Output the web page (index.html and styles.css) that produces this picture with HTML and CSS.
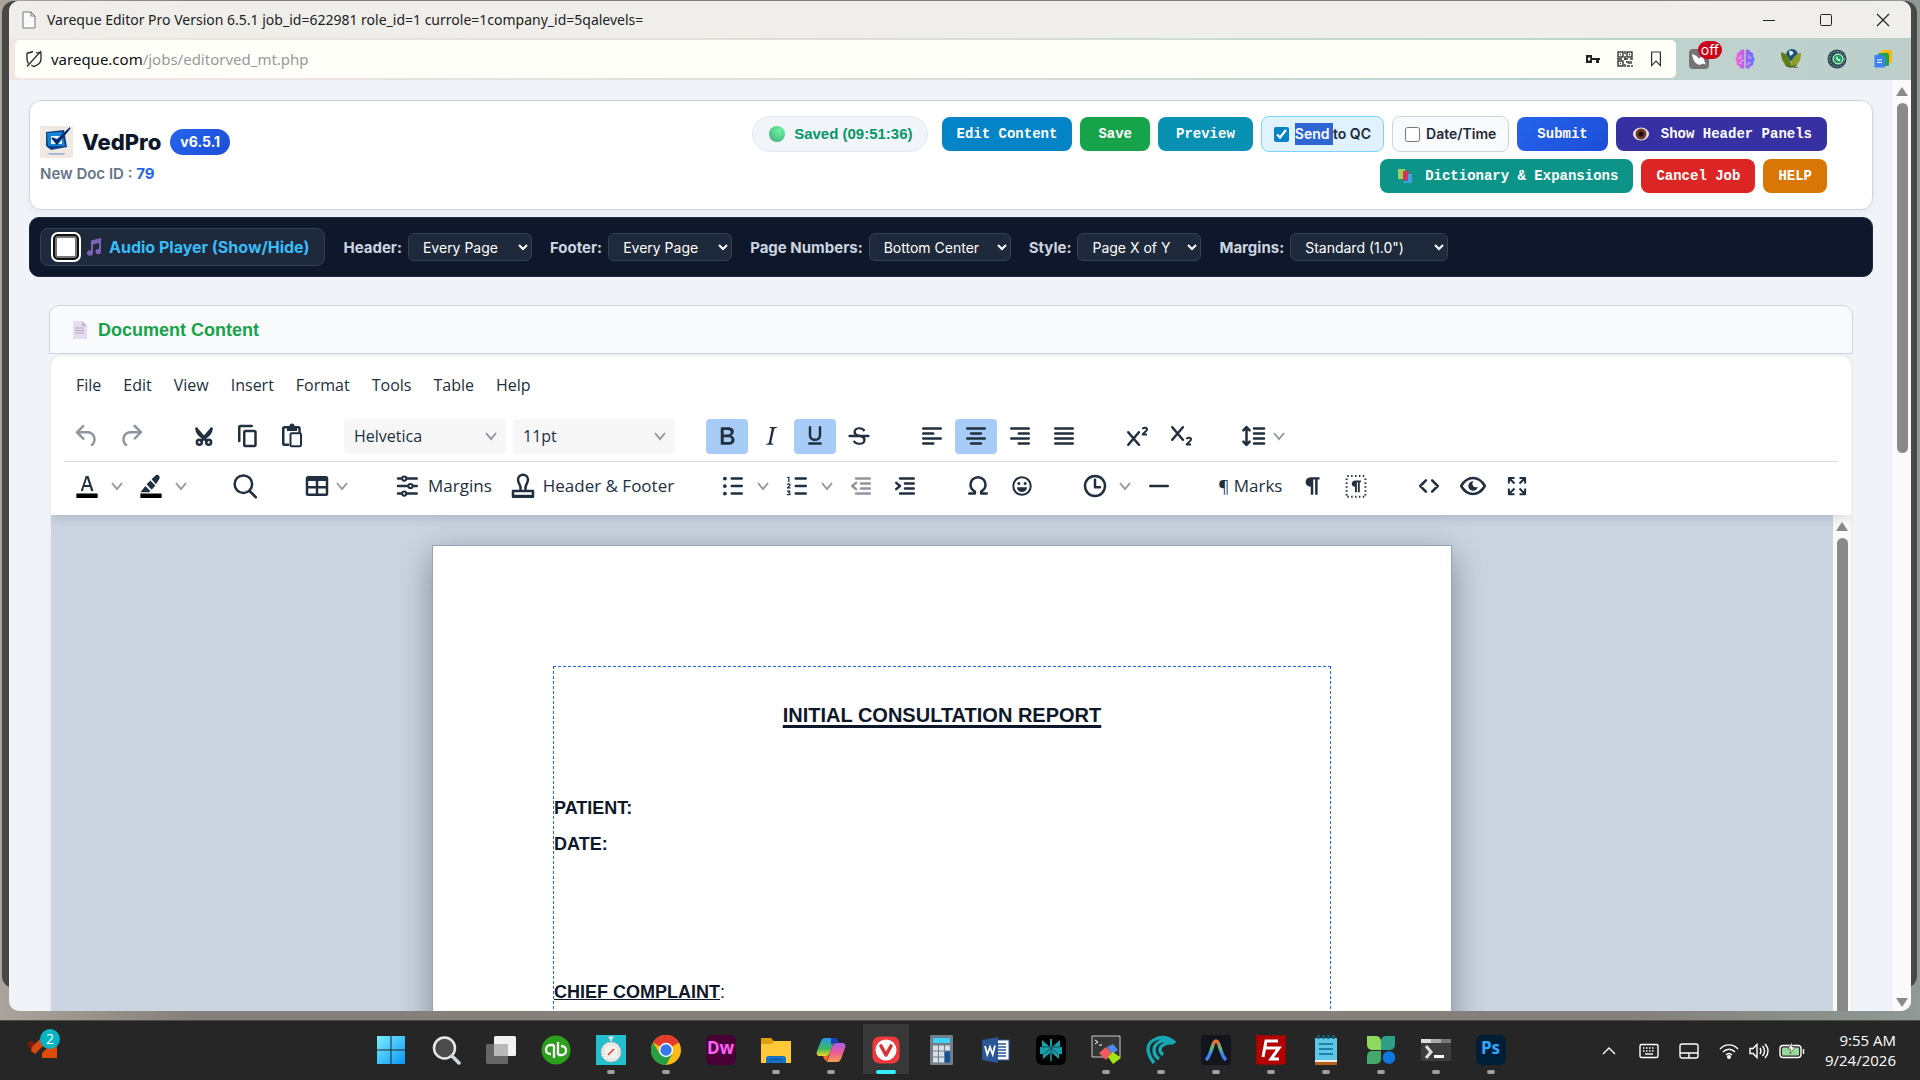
FILE: index.html
```html
<!DOCTYPE html>
<html lang="en">
<head>
<meta charset="utf-8">
<title>Vareque Editor Pro</title>
<link rel="stylesheet" href="styles.css">
</head>
<body>
<div class="desktop">
<div class="back-window"></div>
<div class="window">
  <div class="titlebar">
    <svg class="ic-file" viewBox="0 0 14 18" width="14" height="18"><path d="M1 1h8l4 4v12H1z" fill="#fafafa" stroke="#777"/><path d="M9 1v4h4" fill="none" stroke="#777"/></svg>
    <span class="title">Vareque Editor Pro Version 6.5.1 job_id=622981 role_id=1 currole=1company_id=5qalevels=</span>
    <div class="win-controls">
      <button aria-label="Minimize"><svg viewBox="0 0 14 14" width="14" height="14"><path d="M1 7.500h12" stroke="#222"/></svg></button>
      <button aria-label="Maximize"><svg viewBox="0 0 14 14" width="14" height="14"><rect x="1.500" y="1.500" width="11" height="11" rx="1" fill="none" stroke="#222"/></svg></button>
      <button aria-label="Close"><svg viewBox="0 0 14 14" width="14" height="14"><path d="M1 1l12 12M13 1L1 13" stroke="#222" stroke-width="1.200"/></svg></button>
    </div>
  </div>
  <div class="addressbar">
    <div class="urlfield">
      <svg viewBox="0 0 18 18" width="18" height="18" fill="none" stroke="#333" stroke-width="1.400"><path d="M2 3c3 0 5-1 6-1.500M2 3v6c0 2 .6 3.500 1.500 4.700M11 2.600c1.500.4 3 .4 5 .4v6c0 4-3 6-7 7.500-1-.4-2-.9-2.800-1.500"/><path d="M16 1L2 16.500"/></svg>
      <span class="url"><b>vareque.com</b>/jobs/editorved_mt.php</span>
      <div class="url-icons">
        <svg viewBox="0 0 16 16" width="16" height="16"><path d="M1 4h6v3h8v2h-1v3h-3V9H7v3H1zM3 6.500v3h2.200v-3z" fill="#222" fill-rule="evenodd"/></svg>
        <svg viewBox="0 0 16 16" width="16" height="16" fill="none" stroke="#333" stroke-width="1.400"><rect x="1" y="1" width="5" height="5"/><rect x="10" y="1" width="5" height="5"/><rect x="1" y="10" width="5" height="5"/><path d="M3 3.500h1M12 3.500h1M3 12.500h1M8 0v3M8 5v4M0 8h5M7 8h4M13 8h3M9 11h3v2M14 10v3M8 13v3M10 15h3M15 14v2"/></svg>
        <svg viewBox="0 0 16 18" width="14" height="18" fill="none" stroke="#333" stroke-width="1.400"><path d="M3 1h10v15.500l-5-5-5 5z"/></svg>
      </div>
    </div>
    <div class="extensions">
      <span class="ext"><svg viewBox="0 0 20 20" width="20" height="20"><rect width="20" height="20" rx="4" fill="#747474"/><path d="M3 5c4 1 6 3 7 5l3-4c2 3 2 6 4 10-3-2-4-1-6 0-5-1-7-5-8-11z" fill="#fff"/></svg><span class="badge-off">off</span></span>
      <span class="ext"><svg viewBox="0 0 20 20" width="20" height="20"><defs><linearGradient id="br" x1="0" x2="1"><stop stop-color="#f06acb"/><stop offset=".5" stop-color="#b45cf5"/><stop offset="1" stop-color="#5b74ff"/></linearGradient></defs><path d="M9.300 1v18C7 20.500 4.500 19 4.500 17 2 17 1 15 2 13 0 12 0 8.500 2 7.500 1 5 2.500 3 4.500 3 5 .5 8 0 9.300 1zM10.700 1v18c2.300 1.500 4.800 0 4.800-2 2.500 0 3.500-2 2.500-4 2-1 2-4.500 0-5.500 1-2.500-.5-4.500-2.500-4.500-.5-2.500-3.500-3-4.800-2z" fill="url(#br)"/><path d="M3 9h3v-3M17 9h-3v-3M4 14h3M16 14h-3v3M9 11.500H6" stroke="#fff" stroke-opacity=".55" fill="none"/></svg></span>
      <span class="ext"><svg viewBox="0 0 20 20" width="20" height="20"><circle cx="11" cy="6" r="6" fill="#1d5177"/><path d="M8 2c3-1 5 1 4 3l-3 2z" fill="#dfeef8"/><path d="M0 3c7 2 10 7 10 14C3 17 0 11 0 3z" fill="#5f7d1a"/><path d="M20 4c-6 1-10 6-10 13 7 0 10-5 10-13z" fill="#8a9d27"/><path d="M3 14c4 4 10 4 14 0l-2 3c-3 2-7 2-10 0z" fill="#46601a"/><path d="M13 18.500h4" stroke="#666"/></svg></span>
      <span class="ext"><svg viewBox="0 0 20 20" width="20" height="20"><circle cx="10" cy="10" r="9.500" fill="#2a4a52"/><circle cx="10" cy="10" r="7.500" fill="none" stroke="#8fa6aa" stroke-dasharray="2 1.500"/><circle cx="11" cy="10" r="5" fill="#17a35b" stroke="#fff"/><path d="M9 8c0 3 2 4 4 4l.5-1.500-1.500-.5-.7.5c-.6-.3-.8-.6-1-1l.5-.6-.5-1.300z" fill="#fff"/></svg></span>
      <span class="ext"><svg viewBox="0 0 20 20" width="20" height="20"><rect x="8" y="1" width="11" height="13" rx="1.500" fill="#f5b912"/><rect x="5" y="4" width="11" height="13" rx="1.500" fill="#229f53"/><path d="M1.500 6H9l3 3v9.500H1.500z" fill="#3b82f0"/><path d="M4 11h5M4 13.500h5" stroke="#fff"/></svg></span>
    </div>
  </div>

  <div class="viewport">
    <main class="page">
      <header class="card">
        <div class="brand">
          <div class="brand-row">
            <svg viewBox="0 0 33 32" width="33" height="32"><rect width="33" height="32" fill="#efe9e2"/><path d="M6 6l18-2 3 17-16 3-5-4z" fill="#0f3f86"/><path d="M7 7l15-1 3 14H8z" fill="#1583d8"/><path d="M11 10h11v8H11z" fill="#eaf6ff"/><path d="M12 12l5 6L30 2 17 14z" fill="#0a2f6e" stroke="#0a2f6e" stroke-width="1.500"/><path d="M7 27h19l-3 2H10z" fill="#a9b8d4"/></svg>
            <h1>VedPro</h1>
            <span class="version">v6.5.1</span>
          </div>
          <div class="doc-id">New Doc ID : <b>79</b></div>
        </div>
        <div class="actions">
          <span class="saved"><i class="dot"></i>Saved (09:51:36)</span>
          <button class="btn sky">Edit Content</button>
          <button class="btn wide green">Save</button>
          <button class="btn wide cyan">Preview</button>
          <label class="check on"><input type="checkbox" checked><span><mark>Send </mark>to QC</span></label>
          <label class="check"><input type="checkbox">Date/Time</label>
          <button class="btn submit">Submit</button>
          <button class="btn indigo"><svg viewBox="0 0 20 16" width="22" height="16"><ellipse cx="9" cy="8" rx="8" ry="6.500" fill="#f1e6e6"/><circle cx="9" cy="8" r="5.500" fill="#6b3a2c"/><circle cx="9" cy="8" r="2.500" fill="#160b08"/></svg>Show Header Panels</button>
          <button class="btn teal"><svg viewBox="0 0 20 16" width="22" height="16"><path d="M2 1h7v10H2z" fill="#9bd35a"/><path d="M7 3h6v10l-6-1z" fill="#d8335f"/><path d="M12 6h4v9H8l-1-2h5z" fill="#3aa5e0"/></svg>Dictionary &amp; Expansions</button>
          <button class="btn red">Cancel Job</button>
          <button class="btn amber">HELP</button>
        </div>
      </header>

      <section class="options">
        <label class="audio"><input type="checkbox"><svg viewBox="0 0 16 18" width="16" height="18"><path d="M5 2.500L15 0v13.500a2.800 2.600 0 1 1-2-2.400V5L7 6.500V15a3 2.700 0 1 1-2-2.500z" fill="#7a63b4"/></svg>Audio Player (Show/Hide)</label>
        <label class="opt">Header:<select><option>Every Page</option></select></label>
        <label class="opt">Footer:<select><option>Every Page</option></select></label>
        <label class="opt">Page Numbers:<select class="w-mid"><option>Bottom Center</option></select></label>
        <label class="opt">Style:<select><option>Page X of Y</option></select></label>
        <label class="opt">Margins:<select class="w-large"><option>Standard (1.0")</option></select></label>
      </section>

      <section class="document">
        <h2><svg viewBox="0 0 16 20" width="16" height="20"><path d="M1 1h9l5 5v13H1z" fill="#e6dcf0"/><path d="M10 1v5h5z" fill="#c3b4d2"/><path d="M3 8h9M3 10.500h9M3 13h9" stroke="#b3a8c0"/></svg>Document Content</h2>
        <div class="editor">
          <div class="tools">
            <nav class="menubar"><button>File</button><button>Edit</button><button>View</button><button>Insert</button><button>Format</button><button>Tools</button><button>Table</button><button>Help</button></nav>
            <div class="toolbar">
              <div class="group">
                <button class="tool off" aria-label="Undo"><svg viewBox="0 0 24 24"><path d="M6.400 8H12c3.700 0 6.200 2 6.800 5.100.6 2.700-.4 5.600-2.300 6.800a1 1 0 0 1-1-1.800c1.100-.6 1.800-2.700 1.400-4.600-.5-2.100-2.100-3.500-4.900-3.500H6.400l3.300 3.300a1 1 0 1 1-1.400 1.400l-5-5a1 1 0 0 1 0-1.400l5-5a1 1 0 0 1 1.400 1.400L6.400 8Z"/></svg></button>
                <button class="tool off" aria-label="Redo"><svg viewBox="0 0 24 24"><path d="M17.600 10H12c-2.800 0-4.400 1.400-4.900 3.500-.4 2 .3 4 1.400 4.600a1 1 0 1 1-1 1.800c-2-1.200-2.900-4.100-2.300-6.800.6-3 3-5.100 6.800-5.100h5.600l-3.300-3.300a1 1 0 1 1 1.400-1.400l5 5a1 1 0 0 1 0 1.400l-5 5a1 1 0 0 1-1.400-1.400l3.300-3.300Z"/></svg></button>
              </div>
              <div class="group">
                <button class="tool" aria-label="Cut"><svg viewBox="0 0 24 24"><path d="M6 6c0 4 3 6 5 7.500l3.500 2.500M18 6c0 4-3 6-5 7.500L9.500 16" class="ln"/><path d="M6.300 6.500L12 13l5.700-6.500" class="ln"/><circle cx="8.300" cy="17" r="2" class="ln"/><circle cx="15.700" cy="17" r="2" class="ln"/></svg></button>
                <button class="tool" aria-label="Copy"><svg viewBox="0 0 24 24"><path d="M5 16V5c0-.6.4-1 1-1h9" class="ln"/><rect x="9" y="8" width="9" height="12" rx="1" class="ln"/></svg></button>
                <button class="tool" aria-label="Paste"><svg viewBox="0 0 24 24"><path d="M9 19H6c-.6 0-1-.4-1-1V6c0-.6.4-1 1-1h11c.6 0 1 .4 1 1v3" class="ln"/><path d="M8 4h2a2 2 0 0 1 4 0h2v4H8z"/><rect x="10.800" y="9.800" width="8.400" height="10.400" rx="1" class="ln thin"/></svg></button>
              </div>
              <div class="group selects">
                <span class="pick"><select aria-label="Font"><option>Helvetica</option></select><svg viewBox="0 0 14 14" width="14" height="14"><path d="M2 4l5 6 5-6"/></svg></span>
                <span class="pick"><select aria-label="Size"><option>11pt</option></select><svg viewBox="0 0 14 14" width="14" height="14"><path d="M2 4l5 6 5-6"/></svg></span>
              </div>
              <div class="group">
                <button class="tool active" aria-label="Bold"><svg viewBox="0 0 24 24"><path d="M7.800 19c-.3 0-.5 0-.6-.2l-.2-.5V5.700c0-.2 0-.4.2-.5l.6-.2h5c1.500 0 2.700.3 3.500 1 .7.6 1.100 1.400 1.100 2.500a3 3 0 0 1-.6 1.900c-.4.6-1 1-1.600 1.200.4.1.9.3 1.300.6s.8.7 1 1.200c.4.4.5 1 .5 1.600 0 1.300-.4 2.300-1.300 3-.8.7-2.100 1-3.800 1H7.800Zm5-8.300c.6 0 1.200-.1 1.600-.5.4-.3.6-.7.6-1.300 0-1.100-.8-1.700-2.300-1.700H9.300v3.500h3.400Zm.5 6c.7 0 1.300-.1 1.700-.4.4-.4.6-.9.6-1.500s-.2-1-.7-1.400c-.4-.3-1-.4-2-.4H9.400v3.800h4Z"/></svg></button>
                <button class="tool" aria-label="Italic"><svg viewBox="0 0 24 24"><path d="m16.700 4.700-.1.900h-.3c-.6 0-1 0-1.400.3-.3.3-.4.6-.5 1.100l-2.100 9.800v.6c0 .5.4.8 1.400.8h.2l-.2.8H8l.2-.8h.2c1.100 0 1.800-.5 2-1.500l2-9.800.1-.5c0-.6-.4-.8-1.400-.8h-.3l.2-.9h5.800Z"/></svg></button>
                <button class="tool active" aria-label="Underline"><svg viewBox="0 0 24 24"><path d="M8 5v6.500C8 13.500 9.800 15 12 15s4-1.500 4-3.500V5M7.500 18h9" class="ln"/></svg></button>
                <button class="tool" aria-label="Strikethrough"><svg viewBox="0 0 24 24"><path d="M15.600 8.500c-.5-.7-1-1.100-1.300-1.300-.6-.4-1.300-.6-2-.6-2.700 0-2.800 1.700-2.800 2.100 0 1.600 1.800 2 3.200 2.300 4.400.9 4.600 2.800 4.600 3.900 0 1.400-.7 4.100-5 4.100A6.200 6.200 0 0 1 7 16.400l1.500-1.100c.4.6 1.600 2 3.700 2 1.600 0 2.500-.4 3-1.200.4-.8.3-2-.8-2.600-.7-.4-1.600-.7-2.900-1-1-.2-3.900-.8-3.900-3.600C7.600 6 10.300 5 12.400 5c2.900 0 4.200 1.600 4.700 2.400l-1.500 1.100Z"/><path d="M4.500 12h15" class="ln"/></svg></button>
              </div>
              <div class="group">
                <button class="tool" aria-label="Align left"><svg viewBox="0 0 24 24"><path d="M5 6h14M5 10h8M5 14h14M5 18h8" class="ln"/></svg></button>
                <button class="tool active" aria-label="Align center"><svg viewBox="0 0 24 24"><path d="M5 6h14M8 10h8M5 14h14M8 18h8" class="ln"/></svg></button>
                <button class="tool" aria-label="Align right"><svg viewBox="0 0 24 24"><path d="M5 6h14M11 10h8M5 14h14M11 18h8" class="ln"/></svg></button>
                <button class="tool" aria-label="Justify"><svg viewBox="0 0 24 24"><path d="M5 6h14M5 10h14M5 14h14M5 18h14" class="ln"/></svg></button>
              </div>
              <div class="group">
                <button class="tool" aria-label="Superscript"><svg viewBox="0 0 24 24"><path d="M5 9l8.500 10M13.500 9L5 19" class="ln"/><path d="M16.500 6.500c.3-1.500 3.500-1.600 3.500.3 0 1.500-2.500 2.200-3.500 4H20" class="ln thin"/></svg></button>
                <button class="tool" aria-label="Subscript"><svg viewBox="0 0 24 24"><path d="M5 5l8.500 10M13.500 5L5 15" class="ln"/><path d="M16.500 14.500c.3-1.500 3.500-1.600 3.500.3 0 1.500-2.500 2.200-3.500 4H20" class="ln thin"/></svg></button>
              </div>
              <div class="group">
                <button class="tool drop" aria-label="Line height"><svg viewBox="0 0 24 24"><path d="M6 5v14M3.500 7.500L6 4.800l2.500 2.700M3.500 16.500L6 19.200l2.500-2.700M12 6h8M12 10h8M12 14h8M12 18h8" class="ln"/></svg><svg class="chev" viewBox="0 0 14 14"><path d="M2 4l5 6 5-6"/></svg></button>
              </div>
            </div>
            <div class="toolbar second">
              <div class="group">
                <button class="tool split" aria-label="Text color"><svg viewBox="0 0 24 24"><path d="M3.500 18h17v3.500h-17z" fill="#000"/><path d="M8.700 16H7l4-12h2.200l4 12h-1.900l-1-3.200H9.700L8.700 16Zm1.500-4.800h3.600L12 5.700z"/></svg><svg class="chev" viewBox="0 0 14 14"><path d="M2 4l5 6 5-6"/></svg></button>
                <button class="tool split" aria-label="Highlight color"><svg viewBox="0 0 24 24"><path d="M3.500 18h17v3.500h-17z" fill="#000"/><path d="M3.500 17l4-5 4 4-1 1zM8.500 10.500l3-3 4 4-3 3.500zM12.500 6.500l3-3c2-1.500 4.500 1 3 3l-2.500 4z"/></svg><svg class="chev" viewBox="0 0 14 14"><path d="M2 4l5 6 5-6"/></svg></button>
              </div>
              <div class="group"><button class="tool" aria-label="Find"><svg viewBox="0 0 24 24"><circle cx="11.500" cy="10.500" r="7" class="ln"/><path d="M16.500 16l5 5" class="ln"/></svg></button></div>
              <div class="group"><button class="tool drop" aria-label="Table"><svg viewBox="0 0 24 24"><path fill-rule="evenodd" d="M19 4a2 2 0 0 1 2 2v12a2 2 0 0 1-2 2H5a2 2 0 0 1-2-2V6c0-1.100.9-2 2-2h14ZM5 14v4h6v-4H5Zm14 0h-6v4h6v-4Zm0-6h-6v4h6V8ZM5 12h6V8H5v4Z"/></svg><svg class="chev" viewBox="0 0 14 14"><path d="M2 4l5 6 5-6"/></svg></button></div>
              <div class="group">
                <button class="tool text"><svg viewBox="0 0 24 24"><path d="M4 6h3M11 6h8M4 12h8M16 12h3M4 18h3M11 18h8" class="ln"/><circle cx="9" cy="6" r="1.700" class="ln thin"/><circle cx="14" cy="12" r="1.700" class="ln thin"/><circle cx="9" cy="18" r="1.700" class="ln thin"/></svg>Margins</button>
                <button class="tool text"><svg viewBox="0 0 24 24"><path d="M10 15c1-3-2-5-2-8a4 4 0 0 1 8 0c0 3-3 5-2 8M4 20.500h16v-4.500H4z" class="ln"/><path d="M4 19h16v2H4z"/></svg>Header &amp; Footer</button>
              </div>
              <div class="group">
                <button class="tool split" aria-label="Bullet list"><svg viewBox="0 0 24 24"><path d="M11 6h8M11 12h8M11 18h8" class="ln"/><circle cx="5.500" cy="6" r="1.500"/><circle cx="5.500" cy="12" r="1.500"/><circle cx="5.500" cy="18" r="1.500"/></svg><svg class="chev" viewBox="0 0 14 14"><path d="M2 4l5 6 5-6"/></svg></button>
                <button class="tool split" aria-label="Numbered list"><svg viewBox="0 0 24 24"><path d="M11 6h8M11 12h8M11 18h8" class="ln"/><path d="M4.500 5h1v3.500M4.300 10.500h2v1l-2 2h2.200M4.300 16h2l-1 1.200 1 .4v1.200h-2" class="ln hair"/></svg><svg class="chev" viewBox="0 0 14 14"><path d="M2 4l5 6 5-6"/></svg></button>
                <button class="tool off" aria-label="Outdent"><svg viewBox="0 0 24 24"><path d="M8 6h11M12 10h7M12 14h7M8 18h11M8 9.500L5 12l3 2.500" class="ln"/></svg></button>
                <button class="tool" aria-label="Indent"><svg viewBox="0 0 24 24"><path d="M8 6h11M12 10h7M12 14h7M8 18h11M5 9.500L8 12l-3 2.500" class="ln"/></svg></button>
              </div>
              <div class="group">
                <button class="tool" aria-label="Special character"><svg viewBox="0 0 24 24"><path d="M5 18h4.500v-1.500C7 15 6 13 6 11c0-3.300 2.500-6 6-6s6 2.700 6 6c0 2-1 4-3.500 5.500V18H19" class="ln"/></svg></button>
                <button class="tool" aria-label="Emoji"><svg viewBox="0 0 24 24"><circle cx="12" cy="12" r="7" class="ln thin"/><circle cx="9.500" cy="10" r="1.200"/><circle cx="14.500" cy="10" r="1.200"/><path d="M8 13h8c0 5-8 5-8 0z"/></svg></button>
              </div>
              <div class="group">
                <button class="tool split" aria-label="Date and time"><svg viewBox="0 0 24 24"><circle cx="12" cy="12" r="8" class="ln"/><path d="M12 7v6h4" class="ln"/></svg><svg class="chev" viewBox="0 0 14 14"><path d="M2 4l5 6 5-6"/></svg></button>
                <button class="tool" aria-label="Horizontal line"><svg viewBox="0 0 24 24"><path d="M5 12h14" class="ln"/></svg></button>
              </div>
              <div class="group">
                <button class="tool text">¶ Marks</button>
                <button class="tool" aria-label="Paragraph marks"><svg viewBox="0 0 24 24"><path d="M11 5h7v1.800h-1.500V19h-2V6.800H13V19h-2v-6.500C5.500 12.500 5.500 5 11 5z"/></svg></button>
                <button class="tool" aria-label="Show blocks"><svg viewBox="0 0 24 24"><path d="M5 4h14.500M5 20.500h14.500M4.500 6v14M19.500 6v14" class="ln thin" stroke-dasharray="1.200 1.900"/><path d="M11.500 7.500H16V9h-1v8h-1.500V9h-.8v8h-1.500v-4.500c-3.500 0-3.500-5 .3-5z"/></svg></button>
              </div>
              <div class="group">
                <button class="tool" aria-label="Source code"><svg viewBox="0 0 24 24"><path d="M9.500 7.500L5 12l4.500 4.500M14.500 7.500L19 12l-4.500 4.500" class="ln"/></svg></button>
                <button class="tool" aria-label="Preview page"><svg viewBox="0 0 24 24"><path d="M2.500 12c5-8.500 14-8.500 19 0-5 8.500-14 8.500-19 0z" class="ln"/><path d="M12.500 8.300a3.800 3.800 0 1 0 3.300 4 2.400 2.400 0 0 1-3.300-4z"/></svg></button>
                <button class="tool" aria-label="Fullscreen"><svg viewBox="0 0 24 24"><path d="M10 10L6 6M5.500 10V5.500H10M14 10l4-4M14 5.500h4.500V10M10 14l-4 4M5.500 14v4.500H10M14 14l4 4M18.500 14v4.500H14" class="ln thin"/></svg></button>
              </div>
            </div>
          </div>
          <div class="canvas">
            <div class="canvas-body">
              <article class="sheet">
                <div class="margin-box">
                  <h3>INITIAL CONSULTATION REPORT</h3>
                  <p>PATIENT:</p>
                  <p>DATE:</p>
                  <p class="complaint"><u>CHIEF COMPLAINT</u><span>:</span></p>
                </div>
              </article>
            </div>
            <div class="scroll inner"><i class="up"></i><i class="thumb"></i></div>
          </div>
        </div>
      </section>
    </main>
    <div class="scroll outer"><i class="up"></i><i class="thumb"></i><i class="down"></i></div>
  </div>
</div>

<footer class="taskbar">
  <div class="widget">
    <svg viewBox="0 0 40 40" width="40" height="40"><path d="M2 18l4-4 6 6-4 6z" fill="#7d1a0a"/><path d="M7 21l10-10 5 5-12 12-4-3z" fill="#d84a12"/><path d="M20 18h12v14H17v-5l5-5-4-1z" fill="#e04a08"/></svg>
    <span class="count">2</span>
  </div>
  <div class="apps">
    <button aria-label="Start"><svg viewBox="0 0 30 30"><defs><linearGradient id="wn" x1="0" y1="0" x2="1" y2="1"><stop stop-color="#7cefff"/><stop offset="1" stop-color="#0a94f5"/></linearGradient></defs><path d="M1 1h13.500v13.500H1zM15.500 1H29v13.500H15.500zM1 15.500h13.500V29H1zM15.500 15.500H29V29H15.500z" fill="url(#wn)"/></svg></button>
    <button aria-label="Search"><svg viewBox="0 0 30 30"><circle cx="13.500" cy="13" r="10.500" fill="#4b4b4b" stroke="#e5e9ea" stroke-width="2.500"/><path d="M21 21l7 7" stroke="#cfd6d9" stroke-width="3.500" stroke-linecap="round"/></svg></button>
    <button aria-label="Task view"><svg viewBox="0 0 30 30"><rect y="9" width="22" height="20" rx="1.500" fill="#666"/><rect x="8" y="1" width="22" height="20" rx="1.500" fill="#f2f2f2"/><path d="M8 9h14v12H8z" fill="#b9b9b9"/></svg></button>
    <button aria-label="QuickBooks"><svg viewBox="0 0 30 30"><circle cx="15" cy="15" r="14.500" fill="#2ca01c"/><path d="M13 10H9.500a4.500 4.500 0 0 0 0 9H10M13 10v13M17 20h3.500a4.500 4.500 0 0 0 0-9H20M17 20V7" fill="none" stroke="#fff" stroke-width="2.300"/></svg></button>
    <button class="run" aria-label="Stopwatch"><svg viewBox="0 0 30 30"><rect width="30" height="30" fill="#22bfcd"/><circle cx="15" cy="17" r="10" fill="#f1f1ee" stroke="#bbb"/><circle cx="15" cy="17" r="7.500" fill="none" stroke="#aaa" stroke-dasharray="1 2"/><path d="M12 20l6-6" stroke="#d5362e" stroke-width="1.500"/><path d="M15 6V2M12.500 2.500h5" stroke="#e3e3e3" stroke-width="2"/></svg></button>
    <button class="run" aria-label="Chrome"><svg viewBox="0 0 30 30"><circle cx="15" cy="15" r="15" fill="#fbbc16"/><path d="M15 15L2 7.500a15 15 0 0 1 26 0z" fill="#e33b2e"/><path d="M2 7.500A15 15 0 0 0 15 30l6.500-11.200L9 19z" fill="#27a044"/><circle cx="15" cy="15" r="7.200" fill="#fff"/><circle cx="15" cy="15" r="5.700" fill="#3479ea"/></svg></button>
    <button aria-label="Dreamweaver"><span class="tile dw">Dw</span></button>
    <button class="run" aria-label="Files"><svg viewBox="0 0 30 30"><path d="M0 3h10l3 3h12v6H0z" fill="#e0a008"/><path d="M0 9h11l2-3h17v22H0z" fill="#ffc938"/><path d="M5 28v-4c0-2 1-3 3-3h14c2 0 3 1 3 3v4z" fill="#1271c9"/><path d="M9 24.500h12" stroke="#0b4d92"/></svg></button>
    <button class="run" aria-label="Copilot"><svg viewBox="0 0 30 30"><defs><linearGradient id="c1" x2="0" y2="1"><stop stop-color="#2396ec"/><stop offset=".6" stop-color="#3fb85c"/><stop offset="1" stop-color="#edd52a"/></linearGradient><linearGradient id="c2" x2="0" y2="1"><stop stop-color="#a85df0"/><stop offset=".5" stop-color="#ed5a94"/><stop offset="1" stop-color="#f9a050"/></linearGradient></defs><path d="M9 3h10l-5 15c-1 2-2 3-4 3H4c-3 0-4-2-3-5L5 6c1-2 2-3 4-3z" fill="url(#c1)"/><path d="M15 3h4c2 0 3 1 4 5h-5c-2 0-3 1-3 2z" fill="#1c3fb9"/><path d="M21 27H11l5-15c1-2 2-4 4-4h6c3 0 4 2 3 5l-4 11c-1 2-2 3-4 3z" fill="url(#c2)"/><path d="M15 12l-4 14c-2 0-3-2-4-5h3c2 0 3-1 4-3z" fill="#e8682c"/></svg></button>
    <button class="run current" aria-label="Vivaldi"><svg viewBox="0 0 30 30"><rect x="1.500" y="1.500" width="27" height="27" rx="7" fill="#ee3a3d"/><circle cx="15" cy="15" r="10.500" fill="#fff"/><path d="M10 11l5 9 5-9" fill="none" stroke="#d93437" stroke-width="3.600" stroke-linecap="round" stroke-linejoin="round"/></svg></button>
    <button aria-label="Calculator"><svg viewBox="0 0 30 30"><rect x="4" width="23" height="30" rx="1" fill="#717d88"/><path d="M7 3h17v5H7z" fill="#40d3f6"/><path d="M7 10.500h5v5H7zM13 10.500h5v5h-5zM19 10.500h5v5h-5zM7 16.500h5v5H7zM13 16.500h5v5h-5zM7 22.500h5v5H7zM13 22.500h5v5h-5z" fill="#d8e0e6"/><path d="M19 16.500h5v11h-5z" fill="#0e539c"/></svg></button>
    <button aria-label="Word"><svg viewBox="0 0 30 30"><path d="M14 5h14v20H14z" fill="#fff" stroke="#2b5797"/><path d="M16 9h9M16 12h9M16 15h9M16 18h9M16 21h9" stroke="#2b5797" stroke-width="1.400"/><path d="M1 5l16-3v26L1 25z" fill="#2b5797"/><path d="M4 11l2.300 8.500L9 12l2.700 7.500L14 10.500" fill="none" stroke="#fff" stroke-width="1.800"/></svg></button>
    <button aria-label="Perplexity"><svg viewBox="0 0 30 30"><rect width="30" height="30" rx="6" fill="#020202"/><path d="M6 5l8 7V4h2v8l8-7v7h2v7h-3v5l-7-6v8h-2v-8l-7 6v-5H4v-7h2z" fill="#189ea8"/><path d="M15 12v14M15 13l7 6M15 13l-7 6M6 12h18" stroke="#0c4f58" fill="none"/></svg></button>
    <button class="run" aria-label="Terminal tools"><svg viewBox="0 0 30 30"><path d="M1 1h28v21H1z" fill="#353535" stroke="#ccc"/><path d="M4 5l3 2-3 2M8 10h3" stroke="#fff" fill="none"/><path d="M8 18l7-6 6 6-6 7z" fill="#f15b5b"/><path d="M16 12l6-3 5 6-6 4z" fill="#4d8af0"/><path d="M17 22l5-5 8 6-8 6z" fill="#a2e414"/></svg></button>
    <button class="run" aria-label="Swirl"><svg viewBox="0 0 30 30" fill="none" stroke="#16a8b4" stroke-width="3.400"><path d="M29 8C17-3 2 5 2 14c0 6 3 10 6 14M27 7C16 2 8 9 8 15c0 4 2 7 5 9M27 8c-8-1-13 3-13 7 0 2 1 3 3 5"/></svg></button>
    <button class="run" aria-label="Arc plot"><svg viewBox="0 0 30 30"><defs><linearGradient id="ar" x2="0" y2="1"><stop stop-color="#f06a34"/><stop offset=".4" stop-color="#58bd82"/><stop offset=".7" stop-color="#3b82f6"/></linearGradient></defs><rect width="30" height="30" fill="#14151c"/><path d="M5 25C11 20 11 6 15 6s4 14 10 19" fill="none" stroke="url(#ar)" stroke-width="3.500"/></svg></button>
    <button class="run" aria-label="FileZilla"><svg viewBox="0 0 30 30"><rect x="1" y="1" width="28" height="28" fill="#b30000" stroke="#b30000" stroke-width="2" stroke-dasharray="2 1"/><path d="M7 22L10 6h12M9 13h9M15 13h8l-8 11h8" fill="none" stroke="#fff" stroke-width="3"/></svg></button>
    <button class="run" aria-label="Notepad"><svg viewBox="0 0 30 30"><path d="M4 26h22v4H4z" fill="#b45f15"/><path d="M4 24h22v3H4z" fill="#eee"/><path d="M4 3h22v22H4z" fill="#5ec6e6"/><path d="M8 9h14M8 14h14M8 19h14" stroke="#0d6b92" stroke-width="1.600"/><path d="M7.500 0v4M12.500 0v4M17.500 0v4M22.500 0v4" stroke="#0c6387" stroke-width="2.500"/></svg></button>
    <button class="run" aria-label="Clover"><svg viewBox="0 0 30 30"><path d="M1 1h9a5 5 0 0 1 5 5v9H6a5 5 0 0 1-5-5z" fill="#8fd95e"/><path d="M29 1h-9a5 5 0 0 0-5 5v9h9a5 5 0 0 0 5-5z" fill="#2f9f88"/><path d="M1 29h9a5 5 0 0 0 5-5v-8H6a5 5 0 0 0-5 5z" fill="#43a96c"/><circle cx="23" cy="22.500" r="6.300" fill="#0d78e0"/></svg></button>
    <button class="run" aria-label="Console"><svg viewBox="0 0 30 30"><path d="M0 4h30v22H0z" fill="#3c3c3c"/><path d="M0 4h10v4H0z" fill="#ddd"/><path d="M10 4h10v4H10z" fill="#aaa"/><path d="M20 4h10v4H20z" fill="#777"/><path d="M5 11l5 6-5 6" fill="none" stroke="#ddd" stroke-width="3"/><path d="M13 20h10v3H13z" fill="#fff"/></svg></button>
    <button class="run" aria-label="Photoshop"><span class="tile ps">Ps</span></button>
  </div>
  <div class="tray">
    <svg viewBox="0 0 20 20" width="20" height="20"><path d="M4 13l6-6 6 6"/></svg>
    <svg viewBox="0 0 20 20" width="20" height="20"><rect x="1" y="3.500" width="18" height="13" rx="1.500"/><path d="M4 7h12M4 10h12" stroke-dasharray="1.500 1.500"/><path d="M6 13h8"/></svg>
    <svg viewBox="0 0 20 20" width="20" height="20"><rect x="1" y="3" width="18" height="14" rx="2"/><path d="M1 12h18M10 12v5"/></svg>
    <div class="quick">
      <svg viewBox="0 0 20 20" width="20" height="20"><path d="M1 8c5-5.500 13-5.500 18 0M4 11c3.500-3.700 8.500-3.700 12 0M7 14c2-2 4-2 6 0"/><circle cx="10" cy="16" r="1.300" fill="#fff"/></svg>
      <svg viewBox="0 0 20 20" width="20" height="20"><path d="M1 7.500h3l4-4v13l-4-4H1zM11 7c1.200 1.800 1.200 4.200 0 6M13.500 5c2.500 3 2.500 7 0 10M16 3c4 4 4 10 0 14"/></svg>
      <svg viewBox="0 0 26 20" width="26" height="20"><rect x="1" y="4.500" width="21" height="12" rx="3"/><rect x="3" y="6.500" width="17" height="8" rx="1" fill="#9ad79a" stroke="none"/><path d="M24.500 8v5"/><path d="M13 1l-4 7h3l-1 5 5-7h-3z" fill="#fff" stroke="#222" stroke-width=".5"/></svg>
    </div>
    <div class="clock"><span>9:55 AM</span><span>9/24/2026</span></div>
  </div>
</footer>
</div>
</body>
</html>
```
FILE: styles.css
```css
* { box-sizing: border-box; }
body { margin: 0; }
button { font: inherit; color: inherit; border: 0; background: none; padding: 0; }
svg { display: block; flex: none; }

.desktop {
  height: 100vh;
  display: flex;
  flex-direction: column;
  position: relative;
  overflow: hidden;
  background: linear-gradient(90deg, #aaa49c, #858079 10%, #858079 85%, #8f9995);
  font-family: Inter, "Liberation Sans", sans-serif;
}
.back-window {
  position: absolute;
  inset: 1px 3px 92px 2px;
  background: #474747;
  border-radius: 12px;
}

/* browser window */
.window {
  position: relative;
  flex: 1;
  min-height: 0;
  margin: 1px 9px 9px;
  display: flex;
  flex-direction: column;
  border-radius: 10px;
  overflow: hidden;
  background: #f0f4f9;
}
.titlebar {
  height: 37px;
  flex: none;
  display: flex;
  align-items: center;
  padding-left: 13px;
  background: #efeeea;
  font: 14px/20px "Noto Sans", "Open Sans", sans-serif;
  color: #222;
}
.ic-file { margin-right: 11px; }
.win-controls { margin-left: auto; display: flex; }
.win-controls button { width: 57px; display: grid; place-items: center; }
.addressbar {
  height: 42px;
  flex: none;
  display: flex;
  align-items: center;
  padding: 0 5px 0 6px;
  background: linear-gradient(90deg, #f1e7e1, #d9ded6 50%, #c0d7d1 75%, #becfcb);
}
.urlfield {
  flex: 1;
  height: 38px;
  display: flex;
  align-items: center;
  gap: 8px;
  padding: 0 13px 0 10px;
  border-radius: 5px;
  background: #fffffa;
  font: 15px/22px "Noto Sans", "Open Sans", sans-serif;
  color: #999;
}
.url b { font-weight: 400; color: #111; }
.url-icons { margin-left: auto; display: flex; align-items: center; gap: 16px; }
.extensions { display: flex; }
.ext { position: relative; width: 46px; display: grid; place-items: center; }
.badge-off {
  position: absolute;
  top: -8px;
  right: 0;
  padding: 0 3px;
  border-radius: 9px;
  background: #cc0018;
  color: #fff;
  font-size: 14px;
  line-height: 18px;
}

.viewport { flex: 1; min-height: 0; display: flex; }
.page {
  flex: 1;
  min-width: 0;
  display: flex;
  flex-direction: column;
  padding: 20px 20px 0;
}
.scroll {
  width: 18px;
  flex: none;
  display: flex;
  flex-direction: column;
  align-items: center;
  background: #fafafa;
}
.scroll .up { border: 6px solid transparent; border-top: 0; border-bottom: 9px solid #8a8a8a; margin: 7px 0; }
.scroll .down { border: 6px solid transparent; border-bottom: 0; border-top: 9px solid #8a8a8a; margin: auto 0 4px; }
.thumb { width: 11px; height: 350px; border-radius: 6px; background: #8a8a8a; }
.inner .thumb { flex: 1; border-radius: 6px 6px 0 0; }

/* header card */
.card {
  display: flex;
  justify-content: space-between;
  min-height: 110px;
  padding: 15px 45px 14px 10px;
  border: 1px solid #cbd5e1;
  border-radius: 12px;
  background: #fff;
  box-shadow: 0 4px 8px #0f172a0a;
}
.brand { padding-top: 10px; }
.brand-row { display: flex; align-items: center; gap: 9px; }
h1 { margin: 0; font-size: 22px; line-height: 30px; font-weight: 800; color: #0f172a; }
.version {
  padding: 0 10px;
  border-radius: 13px;
  background: linear-gradient(135deg, #2563eb, #1d4ed8);
  color: #fff;
  font-size: 14px;
  font-weight: 700;
  line-height: 26px;
}
.doc-id { margin-top: 6px; font-size: 15px; line-height: 20px; font-weight: 600; color: #64748b; }
.doc-id b { font-weight: 700; color: #2563eb; }
.actions {
  max-width: 1100px;
  display: flex;
  flex-wrap: wrap;
  justify-content: flex-end;
  align-items: center;
  align-content: flex-start;
  gap: 7px 8px;
}
.saved {
  display: flex;
  align-items: center;
  gap: 9px;
  height: 36px;
  padding: 0 14px 0 16px;
  margin-right: 6px;
  border: 1px solid #e2e8f0;
  border-radius: 18px;
  background: #f1f5f9;
  color: #059669;
  font: bold 15px/20px "Liberation Sans", Arial, sans-serif;
}
.dot { width: 16px; height: 16px; border-radius: 50%; background: radial-gradient(circle at 65% 30%, #6df59c, #4fc88a 60%, #55907c); }
.btn {
  height: 34px;
  display: flex;
  align-items: center;
  gap: 8px;
  padding: 0 15px;
  border-radius: 8px;
  color: #fff;
  font: bold 14px/20px "Liberation Mono", "Courier New", monospace;
}
.wide { padding: 0 18px; }
.sky { background: #0284c7; }
.green { background: #16a34a; }
.cyan { background: #0891b2; }
.submit { padding: 0 20px; background: linear-gradient(135deg, #2563eb, #1d4ed8); }
.indigo { background: #3730a3; }
.teal { background: #0d9488; }
.red { background: #dc2626; }
.amber { background: #d97706; }
.check {
  height: 36px;
  display: flex;
  align-items: center;
  gap: 6px;
  padding: 0 12px;
  border: 1px solid #cbd5e1;
  border-radius: 8px;
  background: #f8fafc;
  color: #1e293b;
  font-size: 14px;
  font-weight: 600;
  line-height: 22px;
}
.check.on { background: #e0f2fe; border-color: #7dd3fc; }
.check input { width: 15px; height: 15px; margin: 0; accent-color: #0284c7; }
.check mark { display: inline-block; white-space: pre; background: #2f65d3; color: #fff; }

/* dark option strip */
.options {
  display: flex;
  align-items: center;
  gap: 18px;
  height: 60px;
  margin-top: 7px;
  padding: 0 10px;
  border: 1px solid #1e293b;
  border-radius: 10px;
  background: #0f172a;
}
.audio {
  height: 38px;
  display: flex;
  align-items: center;
  gap: 7px;
  padding: 0 15px 0 12px;
  border: 1px solid #334155;
  border-radius: 8px;
  background: #1e293b;
  color: #38bdf8;
  font-size: 16px;
  font-weight: 700;
}
.audio input { appearance: none; width: 22px; height: 22px; margin: 0 2px; border: 2px solid #767676; border-radius: 3px; background: #fff; outline: 2px solid #fff; outline-offset: 2px; box-shadow: 0 0 0 2px #101010; }
.opt { display: flex; align-items: center; gap: 6px; color: #cbd5e1; font-size: 15px; font-weight: 700; }
.opt select {
  width: 124px;
  height: 28px;
  padding: 0 0 0 10px;
  border: 1px solid #334155;
  border-radius: 6px;
  background: #1e293b;
  color: #fff;
  font: 14px/20px Inter, sans-serif;
}
.opt .w-mid { width: 142px; }
.opt .w-large { width: 158px; }

/* document */
.document { flex: 1; min-height: 0; display: flex; flex-direction: column; margin: 28px 20px 0; }
h2 {
  display: flex;
  align-items: center;
  gap: 10px;
  height: 49px;
  flex: none;
  margin: 0;
  padding-left: 22px;
  border: 1px solid #cbd5e1;
  border-radius: 10px 10px 0 0;
  background: #f8fafc;
  color: #16a34a;
  font: bold 18px/24px "Liberation Sans", Arial, sans-serif;
}
.editor {
  flex: 1;
  min-height: 0;
  display: flex;
  flex-direction: column;
  border: 2px solid #eee;
  border-bottom: 0;
  border-radius: 12px 12px 0 0;
  overflow: hidden;
  color: #222f3e;
  background: #fff;
  font: 16px/24px "Open Sans", "Noto Sans", sans-serif;
}
.tools { position: relative; flex: none; padding: 0 13px; box-shadow: 0 2px 12px #22304a33; background: #fff; }
.menubar { display: flex; height: 57px; align-items: center; padding-left: 1px; }
.menubar button { padding: 0 11px; }
.toolbar { display: flex; align-items: center; gap: 31px; height: 48px; padding: 0 0 2px 2px; }
.second { height: 54px; padding-bottom: 6px; border-top: 1px solid #ddd; }
.group { display: flex; gap: 2px; }
.selects { gap: 7px; }
.tool { min-width: 42px; height: 35px; display: flex; align-items: center; justify-content: center; border-radius: 4px; }
.tool svg { width: 30px; height: 30px; fill: #222f3e; }
.tool .ln { fill: none; stroke: #222f3e; stroke-width: 2; stroke-linecap: round; stroke-linejoin: round; }
.tool .thin { stroke-width: 1.6; stroke-linecap: butt; }
.tool .hair { stroke-width: 1; }
.active { background: #a6ccf7; }
.off { opacity: .5; }
.split { padding: 0 4px 0 6px; gap: 8px; }
.drop { padding: 0 6px; gap: 3px; }
.tool .chev, .pick svg { width: 14px; height: 14px; fill: none; stroke: #222f3e; stroke-width: 1.8; opacity: .5; }
.text { padding: 0 7px; gap: 5px; font-size: 17px; }
.pick { display: grid; align-items: center; }
.pick select, .pick svg { grid-area: 1 / 1; }
.pick select {
  appearance: none;
  width: 162px;
  height: 35px;
  padding: 0 10px;
  border: 0;
  border-radius: 4px;
  background: #f7f7f7;
  color: #222f3e;
  font: inherit;
}
.pick svg { justify-self: end; margin-right: 8px; pointer-events: none; }

.canvas { flex: 1; min-height: 0; display: flex; background: #cbd5e1; }
.canvas-body { flex: 1; display: flex; justify-content: center; padding-top: 30px; overflow: hidden; }
.sheet {
  width: 1020px;
  height: 1320px;
  flex: none;
  padding: 120px;
  border: 1px solid #94a3b8;
  background: #fff;
  box-shadow: 0 10px 32px #0f172a66;
}
.margin-box {
  height: 100%;
  border: 1px dashed #2563eb;
  color: #0f172a;
  font: bold 18px/36px "Liberation Sans", Arial, sans-serif;
}
.margin-box h3 {
  margin: 30px 0 57px;
  text-align: center;
  font-size: 20px;
  line-height: 36px;
  text-decoration: underline 3px;
  text-underline-offset: 3px;
}
.margin-box p { margin: 0; }
.margin-box .complaint { margin-top: 112px; }
.complaint span { font-weight: 400; }

/* taskbar */
.taskbar {
  position: relative;
  flex: none;
  height: 60px;
  display: flex;
  align-items: stretch;
  border-top: 1px solid #4a4a4a;
  background: #262626;
  color: #fff;
}
.widget { position: relative; width: 363px; padding: 5px 0 0 25px; }
.count {
  position: absolute;
  left: 40px;
  top: 8px;
  width: 20px;
  border-radius: 50%;
  background: #05b5c4;
  text-align: center;
  font: 14px/20px "Open Sans", sans-serif;
}
.apps { display: flex; }
.apps button { width: 55px; display: flex; flex-direction: column; align-items: center; padding-top: 14px; gap: 5px; }
.apps svg, .tile { width: 30px; height: 30px; }
.run::after { content: ""; width: 8px; height: 4px; border-radius: 2px; background: #a0a0a0; }
.apps .current { background: linear-gradient(#383838, #383838) center 3px / 46px 50px no-repeat; }
.current::after { width: 20px; background: #2ef0ff; }
.tile { border-radius: 6px; text-align: center; font: bold 17px/26px "Open Sans", sans-serif; }
.dw { background: #470137; color: #ff61f6; }
.ps { background: #001e36; color: #31a8ff; }
.tray { margin-left: auto; display: flex; align-items: center; gap: 20px; padding-right: 24px; }
.tray svg { fill: none; stroke: #fff; stroke-width: 1.4; }
.quick { display: flex; gap: 10px; }
.clock { display: flex; flex-direction: column; align-items: flex-end; font: 15px/20px "Open Sans", sans-serif; min-width: 70px; padding-bottom: 2px; }
```
